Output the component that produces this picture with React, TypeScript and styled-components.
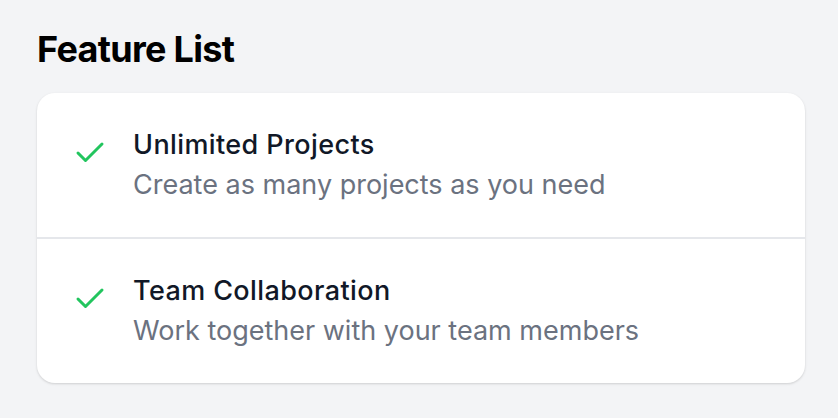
import React from "react";
import styled, { createGlobalStyle } from "styled-components";

const GlobalStyle = createGlobalStyle`
  html, body {
    margin: 0;
    padding: 0;
    background: #f3f4f6;
  }
  body {
    font-family: Inter, "Noto Sans", "Liberation Sans", sans-serif;
    -webkit-font-smoothing: antialiased;
  }
`;

const features = [
  { title: "Unlimited Projects", text: "Create as many projects as you need" },
  { title: "Team Collaboration", text: "Work together with your team members" },
];

function CheckIcon() {
  return (
    <svg width="36" height="36" viewBox="0 0 24 24" fill="none" stroke="#22c55e" strokeWidth="2" strokeLinecap="round" strokeLinejoin="round">
      <path d="M20 6 9 17l-5-5" />
    </svg>
  );
}

function App() {
  return (
    <Page>
      <GlobalStyle />
      <Heading>Feature List</Heading>
      <Card>
        {features.map((f, i) => (
          <Row key={f.title} $first={i === 0}>
            <IconBox>
              <CheckIcon />
            </IconBox>
            <div>
              <Title>{f.title}</Title>
              <Text>{f.text}</Text>
            </div>
          </Row>
        ))}
      </Card>
    </Page>
  );
}

export default App;

const Page = styled.div`
  min-height: 100vh;
  box-sizing: border-box;
  padding: 25px 37px;
`;

const Heading = styled.h1`
  margin: 0 0 20px;
  font-size: 36px;
  line-height: 48px;
  font-weight: 700;
  letter-spacing: -0.7px;
  color: #000;
`;

const Card = styled.div`
  width: 768px;
  background: #fff;
  border-radius: 18px;
  box-shadow: 0 1px 3px rgba(0, 0, 0, 0.1), 0 1px 2px rgba(0, 0, 0, 0.06);
  overflow: hidden;
`;

const Row = styled.div<{ $first: boolean }>`
  display: flex;
  align-items: flex-start;
  gap: 25px;
  padding: 31px 36px 33px;
  border-top: ${(p) => (p.$first ? "none" : "2px solid #e5e7eb")};
`;

const IconBox = styled.div`
  flex: none;
  width: 36px;
  height: 36px;
  margin-top: 11px;
  margin-left: -1px;
  display: flex;
`;

const Title = styled.div`
  font-size: 27px;
  line-height: 42px;
  font-weight: 500;
  letter-spacing: 0.4px;
  color: #111827;
`;

const Text = styled.div`
  font-size: 27px;
  line-height: 38px;
  color: #6b7280;
`;
